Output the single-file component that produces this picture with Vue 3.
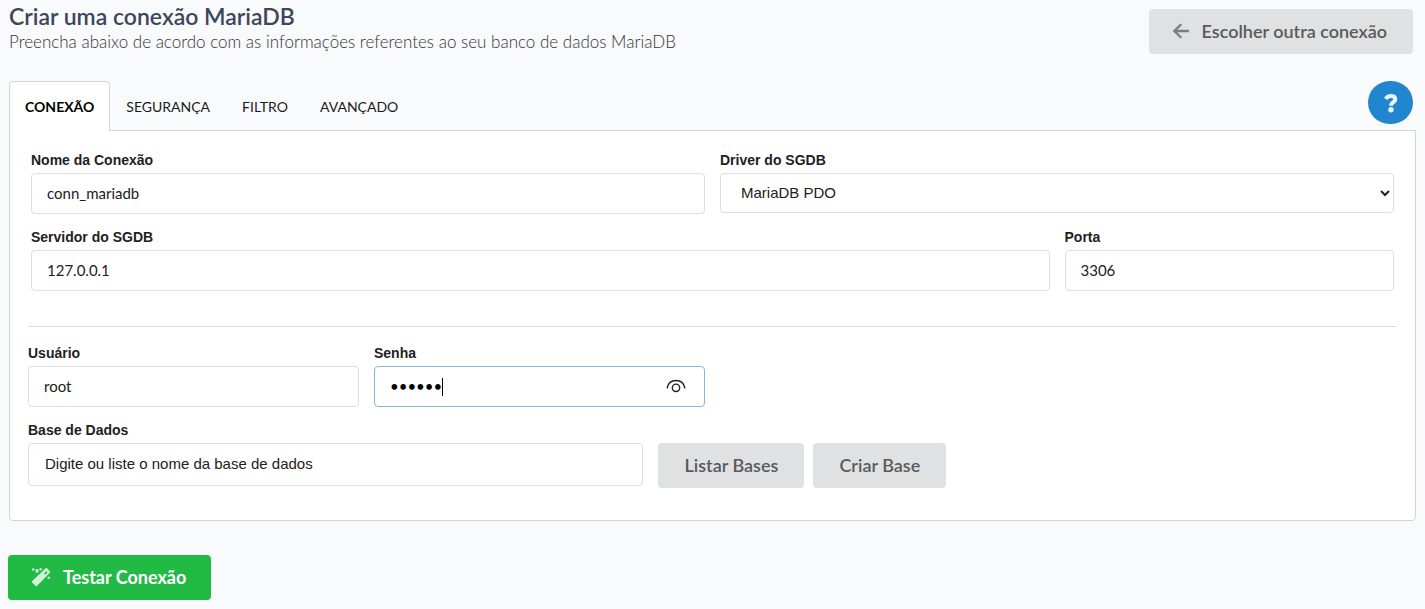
<script setup>
import { ref } from 'vue'

const tabs = ['CONEXÃO', 'SEGURANÇA', 'FILTRO', 'AVANÇADO']
const activeTab = ref(0)
const name = ref('conn_mariadb')
const driver = ref('MariaDB PDO')
const host = ref('127.0.0.1')
const port = ref('3306')
const user = ref('root')
const password = ref('secret')
const database = ref('')
const showPassword = ref(false)
</script>

<template>
  <main class="page">
    <header class="header">
      <div>
        <h1>Criar uma conexão MariaDB</h1>
        <p>Preencha abaixo de acordo com as informações referentes ao seu banco de dados MariaDB</p>
      </div>
      <button type="button" class="btn back">
        <svg width="18" height="18" viewBox="0 0 18 18" aria-hidden="true">
          <path d="M9.300 2.200L2.300 9L9.300 15.800M2.600 9H17" fill="none" stroke="currentColor" stroke-width="2.300" />
        </svg>
        <span>Escolher outra conexão</span>
      </button>
    </header>

    <div class="tabbar">
      <nav class="tabs" role="tablist">
        <button
          v-for="(tab, i) in tabs"
          :key="tab"
          type="button"
          role="tab"
          class="tab"
          :class="{ active: i === activeTab }"
          :aria-selected="i === activeTab"
          @click="activeTab = i"
        >{{ tab }}</button>
      </nav>
      <button type="button" class="help" aria-label="Ajuda">
        <svg width="14" height="20" viewBox="0 0 14 20" aria-hidden="true">
          <path d="M1.800 6C2.900 4 4.700 3 6.800 3C9.500 3 11.300 4.300 11.300 6.300C11.300 9.200 7 9.200 7 12.700" fill="none" stroke="currentColor" stroke-width="4" />
          <circle cx="7" cy="16.800" r="2.700" fill="currentColor" />
        </svg>
      </button>
    </div>

    <form class="panel" @submit.prevent>
      <div class="group inset">
        <div class="field half">
          <label for="name">Nome da Conexão</label>
          <input id="name" v-model="name" type="text" />
        </div>
        <div class="field half">
          <label for="driver">Driver do SGDB</label>
          <select id="driver" v-model="driver">
            <option>MariaDB PDO</option>
          </select>
        </div>
        <div class="field wide">
          <label for="host">Servidor do SGDB</label>
          <input id="host" v-model="host" type="text" />
        </div>
        <div class="field">
          <label for="port">Porta</label>
          <input id="port" v-model="port" type="text" />
        </div>
      </div>

      <hr />

      <div class="group">
        <div class="field">
          <label for="user">Usuário</label>
          <input id="user" v-model="user" type="text" />
        </div>
        <div class="field">
          <label for="password">Senha</label>
          <div class="secret">
            <input id="password" v-model="password" :type="showPassword ? 'text' : 'password'" />
            <span class="caret"></span>
            <button type="button" class="eye" aria-label="Mostrar senha" @click="showPassword = !showPassword">
              <svg width="20" height="14" viewBox="0 0 20 14" aria-hidden="true">
                <path d="M1 9.300C2 4.300 5.500 1.500 10 1.500S18 4.300 19 9.300" fill="none" stroke="currentColor" stroke-width="1.400" />
                <circle cx="10" cy="8.800" r="3.700" fill="none" stroke="currentColor" stroke-width="1.400" />
              </svg>
            </button>
          </div>
        </div>
      </div>

      <div class="database">
        <div class="field">
          <label for="database">Base de Dados</label>
          <input id="database" v-model="database" type="text" placeholder="Digite ou liste o nome da base de dados" />
        </div>
        <div class="actions">
          <button type="button" class="btn">Listar Bases</button>
          <button type="button" class="btn">Criar Base</button>
        </div>
      </div>
    </form>

    <button type="button" class="btn primary">
      <svg width="20" height="20" viewBox="0 0 20 20" aria-hidden="true">
        <path fill="currentColor" fill-rule="evenodd" d="M14.600 1.200Q15.300 .500 16 1.200L19 4.200Q19.700 4.900 19 5.600L6 18.900Q5.300 19.600 4.600 18.900L1.200 15.500Q.500 14.800 1.200 14.100ZM15.300 4.200L13 6.500L14.200 7.700L16.500 5.400Z" />
        <g fill="currentColor">
          <circle cx="2.200" cy="2.400" r="1.200" />
          <circle cx="6" cy="3.900" r="1.800" />
          <circle cx="9.600" cy="2.300" r="1.200" />
          <circle cx="17.700" cy="10.800" r="1.300" />
        </g>
      </svg>
      <span>Testar Conexão</span>
    </button>
  </main>
</template>

<style>
body {
  background: #f9fafc;
}
</style>

<style scoped>
* {
  box-sizing: border-box;
}
.page {
  padding: 3px 9px 9px;
  font-family: Lato, "Liberation Sans", sans-serif;
  color: #212121;
}
.header {
  display: flex;
  justify-content: space-between;
  align-items: flex-start;
  padding-right: 3px;
}
h1 {
  margin: 0;
  font-size: 23px;
  line-height: 26px;
  font-weight: 600;
  color: #3d465a;
}
p {
  margin: 0;
  font-size: 17px;
  line-height: 26px;
  font-weight: 300;
  color: #333;
}
button {
  font-family: inherit;
  cursor: pointer;
}
.btn {
  display: inline-flex;
  align-items: center;
  justify-content: center;
  height: 45px;
  padding: 0 26px 2px;
  border: 0;
  border-radius: 4px;
  background: #e0e1e2;
  color: #5a5a5a;
  font-size: 18px;
  font-weight: 600;
  white-space: nowrap;
}
.back {
  margin-top: 6px;
  padding: 0 26px 2px 23px;
  gap: 12px;
}
.back svg {
  color: #7c7c7c;
}
.tabbar {
  display: flex;
  justify-content: space-between;
  align-items: flex-start;
  margin-top: 26px;
  padding-right: 3px;
}
.tabs {
  display: flex;
  margin-bottom: -1px;
}
.tab {
  height: 50px;
  padding: 0 15px;
  border: 1px solid transparent;
  border-bottom: 0;
  border-radius: 4px 4px 0 0;
  background: none;
  color: #1a1a1a;
  font-size: 14px;
}
.tab.active {
  position: relative;
  border-color: #d4d4d5;
  background: #fff;
  color: #000;
  font-weight: 700;
}
.help {
  display: flex;
  align-items: center;
  justify-content: center;
  width: 45px;
  height: 43px;
  padding: 0;
  border: 0;
  border-radius: 22px;
  background: #2185d0;
  color: #e9f3fa;
}
.panel {
  padding: 21px 18px 32px;
  border: 1px solid #d4d4d5;
  border-radius: 0 0 4px 4px;
  background: #fff;
}
.group {
  display: grid;
  grid-template-columns: repeat(4, 1fr);
  gap: 15px;
}
.inset {
  margin: 0 3px;
}
.half {
  grid-column: span 2;
}
.wide {
  grid-column: span 3;
}
.field {
  display: flex;
  flex-direction: column;
  gap: 5px;
  min-width: 0;
}
label {
  font: bold 14px/16px "Liberation Sans", Arial, sans-serif;
}
input,
select {
  width: 100%;
  height: 41px;
  padding: 0 15px 2px;
  border: 1px solid #dededf;
  border-radius: 4px;
  outline: 0;
  background: #fff;
  color: #212121;
  font-family: inherit;
  font-size: 15px;
}
select {
  height: 40px;
  padding: 0 0 2px 16px;
  font-family: "Liberation Sans", Arial, sans-serif;
}
hr {
  width: 100%;
  margin: 35px 0 18px;
  border: 0;
  border-top: 1px solid #dededf;
}
.secret {
  position: relative;
}
.secret input {
  display: block;
  padding-right: 48px;
  border-color: #85b7d9;
  color: #000;
}
.caret {
  position: absolute;
  left: 68px;
  top: 12px;
  width: 1px;
  height: 18px;
  background: #000;
}
.eye {
  position: absolute;
  right: 19px;
  top: 13px;
  display: flex;
  padding: 0;
  border: 0;
  background: none;
  color: #212121;
}
.database {
  display: grid;
  grid-template-columns: 5fr 6fr;
  gap: 15px;
  margin-top: 15px;
}
.database input {
  height: 43px;
  padding-left: 16px;
  font-family: "Liberation Sans", Arial, sans-serif;
}
.database input::placeholder {
  color: #212121;
  opacity: 1;
}
.actions {
  display: flex;
  align-items: flex-start;
  gap: 9px;
  padding-top: 21px;
}
.primary {
  margin: 34px 0 0 -1px;
  padding: 0 25px 2px 23px;
  gap: 12px;
  background: #21ba45;
  color: #fff;
  font-weight: 700;
}
.primary svg {
  opacity: 0.8;
}
</style>
